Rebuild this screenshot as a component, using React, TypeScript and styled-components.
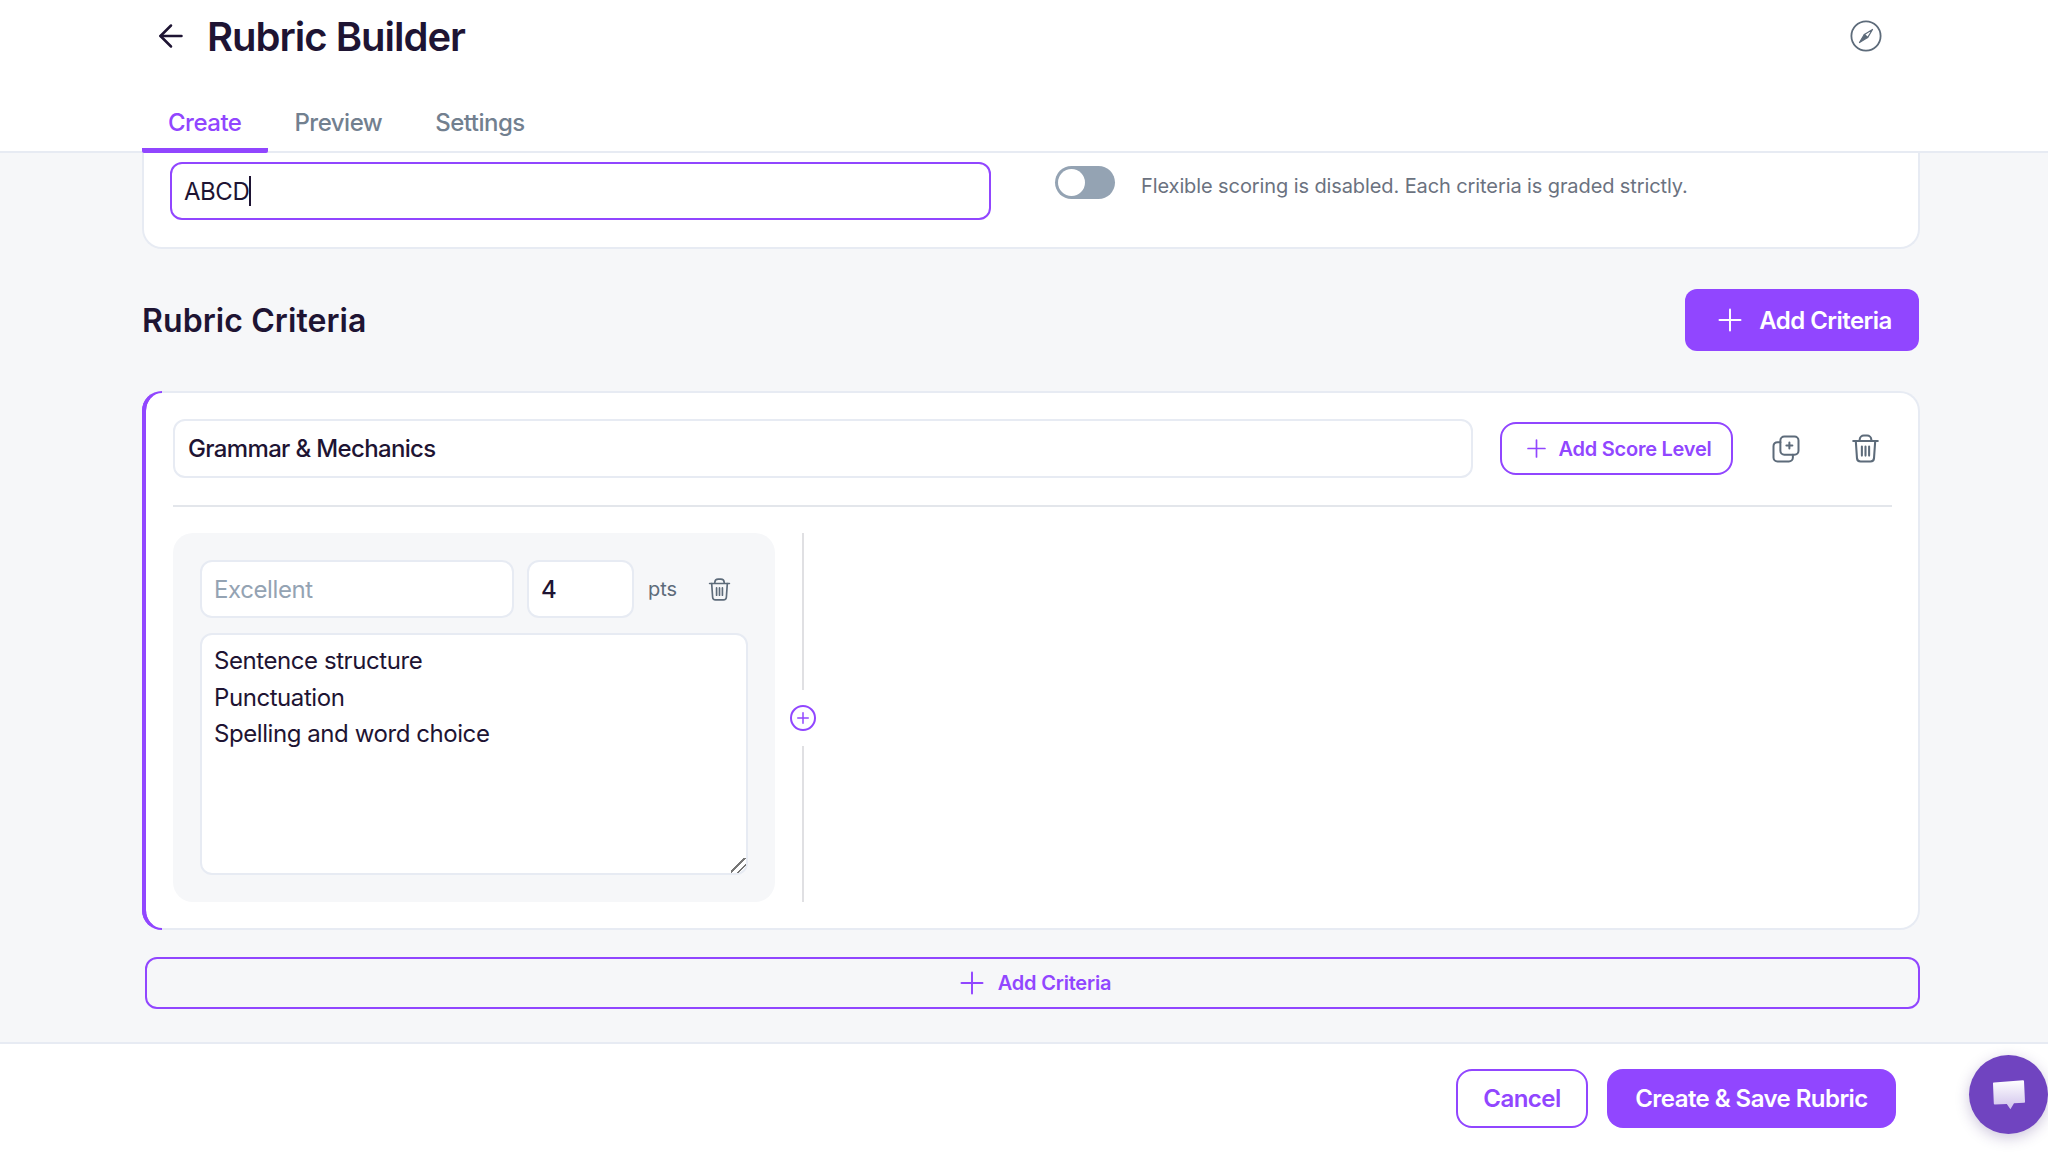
import React from "react";
import styled, { createGlobalStyle } from "styled-components";
import { ArrowLeft, Plus } from "lucide-react";

const purple = "#9146ff";
const ink = "#1e1433";
const line = "#e7ebf3";

const GlobalStyle = createGlobalStyle`
  html, body {
    margin: 0;
    height: 100%;
    background: #fff;
  }
  * {
    box-sizing: border-box;
  }
  body {
    font-family: Inter, "Liberation Sans", sans-serif;
    color: ${ink};
  }
`;

const Page = styled.div`
  position: relative;
  height: 100vh;
  display: flex;
  flex-direction: column;
  overflow: hidden;
`;

const Header = styled.header`
  height: 153px;
  flex: none;
  background: #fff;
  border-bottom: 2px solid ${line};
`;

const TopRow = styled.div`
  height: 72px;
  margin-bottom: 28px;
  padding: 0 166px 0 153px;
  display: flex;
  align-items: center;
  color: ${ink};
`;

const Title = styled.h1`
  flex: 1;
  margin: 0 0 0 18px;
  font-size: 40px;
  font-weight: 600;
  letter-spacing: -1px;
`;

const Tabs = styled.nav`
  height: 53px;
  margin-left: 142px;
  display: flex;
`;

const Tab = styled.div<{ $active?: boolean }>`
  padding: 8px 27px 0 26px;
  font-size: 24px;
  line-height: 29px;
  font-weight: 500;
  letter-spacing: -0.5px;
  color: ${(p) => (p.$active ? purple : "#72808f")};
  border-bottom: 5px solid ${(p) => (p.$active ? purple : "transparent")};
  border-radius: 4px 4px 2px 2px;
`;

const Main = styled.main`
  flex: 1;
  min-height: 0;
  display: flex;
  flex-direction: column;
  padding: 0 128px 0 142px;
  background: #f6f7f9;
`;

const SettingsCard = styled.section`
  height: 96px;
  flex: none;
  display: flex;
  align-items: flex-start;
  padding: 9px 0 0 26px;
  background: #fff;
  border: 2px solid ${line};
  border-top: 0;
  border-radius: 0 0 20px 20px;
`;

const TitleField = styled.div`
  width: 821px;
  height: 58px;
  display: flex;
  align-items: center;
  padding: 0 12px;
  border: 2px solid ${purple};
  border-radius: 12px;
  font-size: 24px;
  letter-spacing: -0.45px;
  color: ${ink};
`;

const Caret = styled.span`
  width: 2px;
  height: 30px;
  background: ${ink};
`;

const Toggle = styled.div`
  width: 60px;
  height: 33px;
  flex: none;
  margin: 4px 0 0 64px;
  padding: 3px;
  border-radius: 17px;
  background: #94a3b3;
`;

const Thumb = styled.div`
  width: 27px;
  height: 27px;
  border-radius: 50%;
  background: #fff;
`;

const ToggleText = styled.span`
  margin: 10px 0 0 26px;
  font-size: 20px;
  line-height: 28px;
  letter-spacing: -0.1px;
  color: #6b7280;
`;

const SectionHead = styled.div`
  height: 62px;
  flex: none;
  margin: 40px 1px 40px 0;
  display: flex;
  align-items: center;
  justify-content: space-between;
`;

const SectionTitle = styled.h2`
  margin: 0;
  font-size: 32px;
  font-weight: 600;
  letter-spacing: 0.09px;
  color: ${ink};
`;

const PrimaryButton = styled.button<{ $wide?: boolean }>`
  height: ${(p) => (p.$wide ? "59px" : "62px")};
  width: ${(p) => (p.$wide ? "289px" : "234px")};
  display: flex;
  align-items: center;
  justify-content: center;
  gap: 11px;
  border: 0;
  border-radius: ${(p) => (p.$wide ? "16px" : "12px")};
  background: ${purple};
  color: #fff;
  font-family: inherit;
  font-size: 24px;
  font-weight: 600;
  letter-spacing: -0.55px;
`;

const CriteriaCard = styled.section`
  position: relative;
  height: 539px;
  flex: none;
  padding: 26px 26px 0 27px;
  background: #fff;
  border: 2px solid ${line};
  border-left: 4px solid ${purple};
  border-radius: 20px;

  &::before {
    content: "";
    position: absolute;
    top: -2px;
    bottom: -2px;
    left: -4px;
    width: 16px;
    border: 2px solid ${purple};
    border-left-width: 4px;
    border-right: 0;
    border-radius: 20px 0 0 20px;
  }
`;

const CriteriaHead = styled.div`
  height: 59px;
  display: flex;
  align-items: center;
`;

const Field = styled.input`
  height: 100%;
  min-width: 0;
  padding: 0 12px;
  border: 2px solid ${line};
  border-radius: 12px;
  background: #fff;
  font-family: inherit;
  font-size: 24px;
  letter-spacing: -0.4px;
  color: ${ink};
  outline: none;

  &::placeholder {
    color: #94a3b3;
    opacity: 1;
  }
`;

const NameField = styled(Field)`
  flex: 1;
  margin-right: 27px;
  padding: 0 13px;
  font-weight: 500;
  letter-spacing: -0.65px;
`;

const OutlineButton = styled.button`
  width: 233px;
  height: 53px;
  flex: none;
  display: flex;
  align-items: center;
  justify-content: center;
  gap: 8px;
  margin-right: 26px;
  border: 2px solid ${purple};
  border-radius: 16px;
  background: #fff;
  color: ${purple};
  font-family: inherit;
  font-size: 20px;
  font-weight: 600;
  letter-spacing: -0.25px;
`;

const IconButton = styled.button<{ $small?: boolean }>`
  width: ${(p) => (p.$small ? "34px" : "54px")};
  height: ${(p) => (p.$small ? "34px" : "54px")};
  flex: none;
  display: flex;
  align-items: center;
  justify-content: center;
  padding: 0;
  border: 0;
  background: none;
  color: #5d6b7a;
`;

const IconGap = styled.div`
  width: 25px;
  flex: none;
`;

const Divider = styled.div`
  height: 2px;
  margin: 27px 0 26px;
  background: #e3e6eb;
`;

const LevelRow = styled.div`
  height: 369px;
  display: flex;
`;

const ScoreCard = styled.div`
  width: 602px;
  flex: none;
  padding: 27px;
  background: #f6f7f9;
  border-radius: 20px;
`;

const ScoreHead = styled.div`
  height: 58px;
  display: flex;
  align-items: center;
`;

const LevelField = styled(Field)`
  width: 314px;
  margin-right: 13px;
`;

const PointsField = styled(Field)`
  width: 107px;
  font-weight: 500;
`;

const PtsLabel = styled.span`
  margin: 0 25px 0 14px;
  font-size: 20px;
  color: #5d6b7a;
`;

const Description = styled.textarea`
  display: block;
  width: 548px;
  height: 242px;
  margin-top: 15px;
  padding: 8px 12px;
  border: 2px solid ${line};
  border-radius: 12px;
  background: #fff;
  font-family: inherit;
  font-size: 24px;
  line-height: 36.5px;
  letter-spacing: -0.43px;
  color: ${ink};
  outline: none;

  &::-webkit-resizer {
    background: linear-gradient(
      135deg,
      transparent 42%,
      #777 42%,
      #777 50%,
      transparent 50%,
      transparent 68%,
      #777 68%,
      #777 76%,
      transparent 76%
    );
  }
`;

const Connector = styled.div`
  width: 26px;
  margin-left: 15px;
  display: flex;
  flex-direction: column;
  align-items: center;
  gap: 15px;
`;

const ConnectorLine = styled.div`
  flex: 1;
  width: 2px;
  background: #e0e0e3;
`;

const AddLevelDot = styled.div`
  width: 26px;
  height: 26px;
  flex: none;
  display: flex;
  align-items: center;
  justify-content: center;
  border: 2px solid ${purple};
  border-radius: 50%;
  color: ${purple};
`;

const WideAdd = styled.button`
  height: 52px;
  flex: none;
  margin: 27px 0 0 3px;
  display: flex;
  align-items: center;
  justify-content: center;
  gap: 8px;
  border: 2px solid ${purple};
  border-radius: 12px;
  background: transparent;
  color: ${purple};
  font-family: inherit;
  font-size: 20px;
  font-weight: 600;
  letter-spacing: -0.2px;
`;

const Footer = styled.footer`
  height: 112px;
  flex: none;
  display: flex;
  justify-content: flex-end;
  gap: 19px;
  padding: 25px 152px 0 0;
  background: #fff;
  border-top: 2px solid ${line};
`;

const CancelButton = styled.button`
  width: 132px;
  height: 59px;
  border: 2px solid ${purple};
  border-radius: 16px;
  background: #fff;
  color: ${purple};
  font-family: inherit;
  font-size: 24px;
  font-weight: 600;
  letter-spacing: -0.55px;
`;

const ChatBubble = styled.div`
  position: absolute;
  right: 0;
  bottom: 20px;
  width: 79px;
  height: 79px;
  display: flex;
  align-items: center;
  justify-content: center;
  border-radius: 50%;
  background: #7044c0;
  box-shadow: 0 4px 14px rgba(60, 30, 120, 0.25);
`;

const TrashIcon = ({ size }: { size: number }) => (
  <svg width={size} height={size} viewBox="0 0 24 24" fill="none" stroke="currentColor" strokeWidth="1.6" strokeLinecap="round" strokeLinejoin="round">
    <path d="M2.5 6.2h19" />
    <path d="M7.5 6V5a3.2 3.2 0 0 1 3.2-3h2.6a3.2 3.2 0 0 1 3.2 3v1" />
    <path d="M4.5 6.4l.9 13a2.8 2.8 0 0 0 2.8 2.6h7.6a2.8 2.8 0 0 0 2.8-2.6l.9-13" />
    <path d="M9.2 10.5v7M12 10.5v7M14.8 10.5v7" />
  </svg>
);

const CopyPlusIcon = () => (
  <svg width="30" height="30" viewBox="0 0 24 24" fill="none" stroke="currentColor" strokeWidth="1.6" strokeLinecap="round" strokeLinejoin="round">
    <rect x="7.5" y="2" width="14.5" height="14.5" rx="3.2" />
    <path d="M7.5 6.5H5.2A3.2 3.2 0 0 0 2 9.7v9.1A3.2 3.2 0 0 0 5.2 22h9.1a3.2 3.2 0 0 0 3.2-3.2v-2.3" />
    <path d="M14.7 6.8v4.8M12.3 9.2h4.8" />
  </svg>
);

const CompassIcon = () => (
  <svg width="32" height="32" viewBox="0 0 32 32" fill="none">
    <circle cx="16" cy="16" r="14.6" stroke="#5d6b7a" strokeWidth="1.8" />
    <path d="M22.5 9.5L17.6 17.6 14.4 14.4z" fill="#fff" stroke="#5d6b7a" strokeWidth="1.2" strokeLinejoin="round" />
    <path d="M9.5 22.5L14.4 14.4 17.6 17.6z" fill="#5d6b7a" stroke="#5d6b7a" strokeWidth="1.2" strokeLinejoin="round" />
  </svg>
);

const ChatIcon = () => (
  <svg width="34" height="32" viewBox="0 0 34 32">
    <defs>
      <linearGradient id="chatFill" x1="0" y1="0" x2="0" y2="1">
        <stop offset="0" stopColor="#ffffff" />
        <stop offset="1" stopColor="#d0c2ec" />
      </linearGradient>
    </defs>
    <path
      d="M2 3.6L31 1.2c.6 0 1 .3 1 .9l1 20.6c0 .6-.4 1-1 1l-10 .6-3.6 6-3.6-5.4-12 .6c-.6 0-1-.3-1-.9L1 4.6c0-.6.4-1 1-1z"
      fill="url(#chatFill)"
    />
  </svg>
);

export default function App() {
  return (
    <Page>
      <GlobalStyle />
      <Header>
        <TopRow>
          <ArrowLeft size={36} strokeWidth={1.7} />
          <Title>Rubric Builder</Title>
          <CompassIcon />
        </TopRow>
        <Tabs>
          <Tab $active>Create</Tab>
          <Tab>Preview</Tab>
          <Tab>Settings</Tab>
        </Tabs>
      </Header>

      <Main>
        <SettingsCard>
          <TitleField>
            ABCD
            <Caret />
          </TitleField>
          <Toggle>
            <Thumb />
          </Toggle>
          <ToggleText>Flexible scoring is disabled. Each criteria is graded strictly.</ToggleText>
        </SettingsCard>

        <SectionHead>
          <SectionTitle>Rubric Criteria</SectionTitle>
          <PrimaryButton>
            <Plus size={36} strokeWidth={1.3} />
            Add Criteria
          </PrimaryButton>
        </SectionHead>

        <CriteriaCard>
          <CriteriaHead>
            <NameField defaultValue="Grammar & Mechanics" />
            <OutlineButton>
              <Plus size={29} strokeWidth={1.4} />
              Add Score Level
            </OutlineButton>
            <IconButton>
              <CopyPlusIcon />
            </IconButton>
            <IconGap />
            <IconButton>
              <TrashIcon size={31} />
            </IconButton>
          </CriteriaHead>
          <Divider />
          <LevelRow>
            <ScoreCard>
              <ScoreHead>
                <LevelField placeholder="Excellent" />
                <PointsField defaultValue="4" />
                <PtsLabel>pts</PtsLabel>
                <IconButton $small>
                  <TrashIcon size={25} />
                </IconButton>
              </ScoreHead>
              <Description defaultValue={"Sentence structure\nPunctuation\nSpelling and word choice"} />
            </ScoreCard>
            <Connector>
              <ConnectorLine />
              <AddLevelDot>
                <Plus size={18} strokeWidth={2} />
              </AddLevelDot>
              <ConnectorLine />
            </Connector>
          </LevelRow>
        </CriteriaCard>

        <WideAdd>
          <Plus size={36} strokeWidth={1.3} />
          Add Criteria
        </WideAdd>
      </Main>

      <Footer>
        <CancelButton>Cancel</CancelButton>
        <PrimaryButton $wide>Create &amp; Save Rubric</PrimaryButton>
      </Footer>

      <ChatBubble>
        <ChatIcon />
      </ChatBubble>
    </Page>
  );
}
